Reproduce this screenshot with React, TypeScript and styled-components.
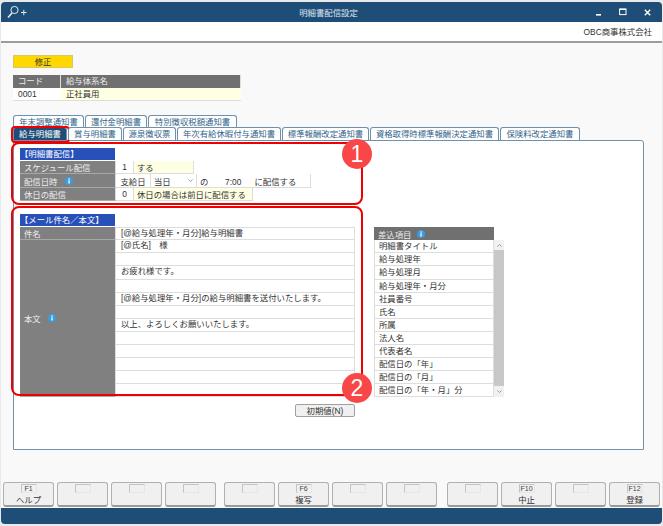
import React from 'react'
import styled, { createGlobalStyle } from 'styled-components'

const GlobalStyle = createGlobalStyle`
  html, body {
    margin: 0;
    padding: 0;
    background: #e9e9e9;
  }
  body {
    font-family: "Liberation Sans", "Noto Sans CJK JP", sans-serif;
    font-size: 8.4px;
    color: #333;
  }
  * {
    box-sizing: border-box;
  }
`

const Win = styled.div`
  display: flex;
  flex-direction: column;
  width: 661px;
  height: 522px;
  margin: 2px 1px 0;
  background: #f9f9f9;
  border-radius: 4px;
  overflow: hidden;
`
const TitleBar = styled.div`
  flex: none;
  display: flex;
  align-items: center;
  height: 20px;
  padding: 0 11px 0 5px;
  background: #1e4d78;
  color: #fff;
`
const TitleSide = styled.div<{ $end?: boolean }>`
  flex: 1;
  display: flex;
  align-items: center;
  justify-content: ${(p) => (p.$end ? 'flex-end' : 'flex-start')};
  gap: 17px;
`
const TitleText = styled.div`
  color: #dfe7ee;
`
const CompanyBar = styled.div`
  flex: none;
  height: 21px;
  padding: 4px 10px 0 0;
  text-align: right;
  line-height: 12px;
  background: #fff;
  border-bottom: 2px solid #9c9c9c;
`
const Content = styled.div`
  flex: 1;
  display: flex;
  flex-direction: column;
  padding: 12px 18px 0 12px;
`
const ModeTag = styled.div`
  width: 60px;
  height: 13px;
  line-height: 12px;
  text-align: center;
  background: #ffd800;
  border: 1px solid #d8c66a;
`
const CodeTable = styled.div`
  display: grid;
  grid-template-columns: 48px 180px;
  grid-auto-rows: 13px;
  width: 228px;
  margin-top: 7px;
`
const HeadCell = styled.div`
  background: #707070;
  color: #eee;
  line-height: 13px;
  padding-left: 5px;
  border-right: 1px solid #ddd;
  &:last-child {
    border-right: 0;
  }
`
const CodeCell = styled.div<{ $yellow?: boolean }>`
  background: ${(p) => (p.$yellow ? '#ffffe4' : '#fff')};
  line-height: 13px;
  padding-left: 5px;
  border-bottom: 1px solid #ddd;
`
const TabRow = styled.div<{ $first?: boolean }>`
  display: flex;
  height: ${(p) => (p.$first ? 12 : 13)}px;
  margin-top: ${(p) => (p.$first ? 14 : 0)}px;
`
const Tab = styled.div<{ $w: number; $active?: boolean }>`
  position: relative;
  width: ${(p) => p.$w}px;
  text-align: center;
  line-height: 13px;
  white-space: nowrap;
  color: ${(p) => (p.$active ? '#fff' : '#2f5f88')};
  background: ${(p) => (p.$active ? '#1e4d78' : '#fff')};
  border: 1px solid #6e92ad;
  border-bottom: 0;
  border-radius: 3px 3px 0 0;
  margin-right: 1px;
  ${(p) =>
    p.$active &&
    `
    &::after {
      content: '';
      position: absolute;
      inset: -2px -4px -3px -3px;
      border: 2.5px solid #f00000;
      border-radius: 4px;
    }
  `}
`
const Panel = styled.div`
  height: 310px;
  width: 631px;
  padding: 7px 0 0 6px;
  background: #fff;
  border: 1px solid #6e92ad;
  border-radius: 0 3px 0 0;
`
const Section = styled.div`
  position: relative;
  width: 335px;
`
const Highlight = styled.div<{ $top: number; $bottom: number }>`
  position: absolute;
  top: ${(p) => p.$top}px;
  bottom: ${(p) => p.$bottom}px;
  left: -9px;
  right: -8px;
  border: 2.5px solid #ee0000;
  border-radius: 8px;
  pointer-events: none;
`
const Badge = styled.div<{ $bottom: number }>`
  position: absolute;
  right: -17px;
  bottom: ${(p) => p.$bottom}px;
  width: 30px;
  height: 30px;
  border-radius: 50%;
  background: #f94646;
  color: #fff;
  font-family: "Liberation Sans", sans-serif;
  font-size: 23px;
  line-height: 30px;
  text-align: center;
`
const SectionHead = styled.div`
  width: 95px;
  height: 12px;
  line-height: 12px;
  background: #2750b8;
  color: #fff;
  margin-bottom: 1px;
`
const SetRow = styled.div`
  display: flex;
  height: 13.4px;
`
const Label = styled.div`
  flex: none;
  display: flex;
  align-items: center;
  gap: 7px;
  width: 96px;
  padding-left: 4px;
  background: #808080;
  color: #eee;
  border-right: 1px solid #ddd;
  border-bottom: 1px solid #a8a8a8;
`
const Val = styled.div<{ $w: number; $yellow?: boolean; $center?: boolean }>`
  flex: none;
  display: flex;
  justify-content: ${(p) => (p.$center ? 'center' : 'space-between')};
  align-items: center;
  width: ${(p) => p.$w}px;
  padding: 0 3px;
  white-space: pre;
  background: ${(p) => (p.$yellow ? '#ffffe4' : '#fff')};
  border-right: 1px solid #ddd;
  border-bottom: 1px solid #ddd;
`
const MailArea = styled.div`
  display: flex;
  margin-top: 13px;
  gap: 19px;
`
const MailColumn = styled.div`
  display: flex;
  flex-direction: column;
`
const MailGrid = styled.div`
  display: grid;
  grid-template-columns: 96px 239px;
  grid-auto-rows: 13.1px;
`
const BodyLabel = styled(Label)`
  grid-column: 1;
  grid-row: 2 / span 12;
`
const MailLine = styled.div`
  grid-column: 2;
  padding-left: 5px;
  line-height: 11px;
  white-space: pre;
  background: #fff;
  border-right: 1px solid #ddd;
  border-bottom: 1px solid #ddd;
  &:nth-child(2) {
    border-top: 1px solid #ddd;
  }
`
const ResetButton = styled.div`
  align-self: flex-end;
  width: 60px;
  height: 13px;
  margin-top: 7px;
  line-height: 12px;
  text-align: center;
  background: #f0f0f0;
  border: 1px solid #a0a0a0;
  border-radius: 2px;
`
const InsertList = styled.div`
  display: grid;
  grid-template-columns: 120px 10px;
  grid-auto-rows: 13.1px;
  margin-top: 13px;
  width: 130px;
  height: 171px;
`
const InsertHead = styled.div`
  grid-column: 1;
  display: flex;
  align-items: center;
  gap: 5px;
  padding-left: 4px;
  background: #707070;
  color: #eee;
`
const InsertItem = styled.div`
  grid-column: 1;
  padding-left: 4px;
  line-height: 12px;
  background: #fff;
  border: 1px solid #ddd;
  border-top: 0;
`
const ScrollBar = styled.div`
  grid-column: 2;
  grid-row: 2 / span 12;
  display: flex;
  flex-direction: column;
  align-items: stretch;
  background: #f1f1f1;
`
const ScrollArrow = styled.div<{ $top?: boolean }>`
  flex: none;
  display: flex;
  align-items: center;
  justify-content: center;
  height: ${(p) => (p.$top ? 10 : 11)}px;
`
const ScrollThumb = styled.div`
  flex: 1;
  background: #c8c8c8;
`
const FunctionBar = styled.div`
  flex: none;
  display: flex;
  align-items: stretch;
  height: 26px;
  margin: auto -16px 0 -10px;
`
const FnGroup = styled.div<{ $gap: number }>`
  display: flex;
  gap: 3px;
  margin-right: ${(p) => p.$gap}px;
`
const FnButton = styled.div`
  width: 51px;
  height: 25px;
  display: flex;
  flex-direction: column;
  align-items: center;
  background: #f0f0f0;
  border: 1px solid #b0b0b0;
  border-bottom: 2px solid #9a9a9a;
  border-radius: 3px;
`
const FnKey = styled.div`
  width: 16px;
  height: 9px;
  margin-top: 1px;
  font-size: 7px;
  line-height: 8px;
  text-align: center;
  color: #444;
  border: 1px solid #e6e6e6;
  border-top-color: #c4c4c4;
  border-left-color: #c4c4c4;
`
const FnLabel = styled.div`
  margin-top: 2px;
  line-height: 11px;
  color: #333;
`
const StatusBar = styled.div`
  flex: none;
  height: 16px;
  background: #1e4d78;
`

const InfoIcon = () => (
  <svg width="8" height="8" viewBox="0 0 8 8">
    <circle cx="4" cy="4" r="4" fill="#3d9be0" />
    <rect x="3.4" y="3.3" width="1.3" height="3.2" fill="#fff" />
    <rect x="3.4" y="1.4" width="1.3" height="1.3" fill="#fff" />
  </svg>
)

const SearchPlus = () => (
  <svg width="22" height="14" viewBox="0 0 22 14" fill="none" stroke="#e4ecf3" strokeWidth="1">
    <circle cx="8.5" cy="5" r="3.6" />
    <path d="M6 8 L2 12.5" strokeWidth="1.6" />
    <path d="M15 7.5 H20.5 M17.8 4.8 V10.2" />
  </svg>
)

const Chevron = ({ up }: { up?: boolean }) => (
  <svg width="5" height="3" viewBox="0 0 5 3" fill="none" stroke="#888" strokeWidth="0.8">
    <path d={up ? 'M0.4 2.6 L2.5 0.5 L4.6 2.6' : 'M0.4 0.4 L2.5 2.5 L4.6 0.4'} />
  </svg>
)

const WinControls = () => (
  <>
    <svg width="6" height="8" viewBox="0 0 6 8">
      <rect x="0" y="6" width="5" height="1.6" fill="#fff" />
    </svg>
    <svg width="8" height="8" viewBox="0 0 8 8" fill="none" stroke="#fff">
      <rect x="0.6" y="1" width="6.4" height="5.6" />
      <path d="M0.6 1.4 H7" strokeWidth="1.4" />
    </svg>
    <svg width="7" height="7" viewBox="0 0 7 7" fill="none" stroke="#fff" strokeWidth="1.4">
      <path d="M0.8 0.8 L6.2 6.2 M6.2 0.8 L0.8 6.2" />
    </svg>
  </>
)

const tabsTop = [
  { label: '年末調整通知書', w: 71 },
  { label: '還付金明細書', w: 62 },
  { label: '特別徴収税額通知書', w: 89 },
]
const tabsBottom = [
  { label: '給与明細書', w: 54, active: true },
  { label: '賞与明細書', w: 54 },
  { label: '源泉徴収票', w: 53 },
  { label: '年次有給休暇付与通知書', w: 104 },
  { label: '標準報酬改定通知書', w: 87 },
  { label: '資格取得時標準報酬決定通知書', w: 129 },
  { label: '保険料改定通知書', w: 80 },
]
const mailLines = [
  '[@氏名]　様',
  '',
  'お疲れ様です。',
  '',
  '[@給与処理年・月分]の給与明細書を送付いたします。',
  '',
  '以上、よろしくお願いいたします。',
  '',
  '',
  '',
  '',
  '',
]
const insertItems = [
  '明細書タイトル',
  '給与処理年',
  '給与処理月',
  '給与処理年・月分',
  '社員番号',
  '氏名',
  '所属',
  '法人名',
  '代表者名',
  '配信日の「年」',
  '配信日の「月」',
  '配信日の「年・月」分',
]
const fnGroups = [
  { gap: 8, keys: [['F1', 'ヘルプ'], ['', ''], ['', ''], ['', '']] },
  { gap: 10, keys: [['', ''], ['F6', '複写'], ['', ''], ['', '']] },
  { gap: 0, keys: [['', ''], ['F10', '中止'], ['', ''], ['F12', '登録']] },
]

export default function App() {
  return (
    <>
      <GlobalStyle />
      <Win>
        <TitleBar>
          <TitleSide>
            <SearchPlus />
          </TitleSide>
          <TitleText>明細書配信設定</TitleText>
          <TitleSide $end>
            <WinControls />
          </TitleSide>
        </TitleBar>
        <CompanyBar>OBC商事株式会社</CompanyBar>
        <Content>
          <ModeTag>修正</ModeTag>
          <CodeTable>
            <HeadCell>コード</HeadCell>
            <HeadCell>給与体系名</HeadCell>
            <CodeCell>0001</CodeCell>
            <CodeCell $yellow>正社員用</CodeCell>
          </CodeTable>
          <TabRow $first>
            {tabsTop.map((t) => (
              <Tab key={t.label} $w={t.w}>
                {t.label}
              </Tab>
            ))}
          </TabRow>
          <TabRow>
            {tabsBottom.map((t) => (
              <Tab key={t.label} $w={t.w} $active={t.active}>
                {t.label}
              </Tab>
            ))}
          </TabRow>
          <Panel>
            <Section>
              <SectionHead>【明細書配信】</SectionHead>
              <SetRow>
                <Label>スケジュール配信</Label>
                <Val $w={18} $center>1</Val>
                <Val $w={60} $yellow>する</Val>
              </SetRow>
              <SetRow>
                <Label>
                  配信日時
                  <InfoIcon />
                </Label>
                <Val $w={35} $center>支給日</Val>
                <Val $w={46}>
                  当日
                  <Chevron />
                </Val>
                <Val $w={114}>{'の　　7:00　  に配信する'}</Val>
              </SetRow>
              <SetRow>
                <Label>休日の配信</Label>
                <Val $w={18} $center>0</Val>
                <Val $w={119} $yellow>休日の場合は前日に配信する</Val>
              </SetRow>
              <Highlight $top={-6} $bottom={-4} />
              <Badge $bottom={32}>1</Badge>
            </Section>
            <MailArea>
              <MailColumn>
                <Section>
                  <SectionHead>【メール件名／本文】</SectionHead>
                  <MailGrid>
                    <Label>件名</Label>
                    <MailLine>[@給与処理年・月分]給与明細書</MailLine>
                    <BodyLabel>
                      本文
                      <InfoIcon />
                    </BodyLabel>
                    {mailLines.map((line, i) => (
                      <MailLine key={i}>{line}</MailLine>
                    ))}
                  </MailGrid>
                  <Highlight $top={-8} $bottom={1} />
                  <Badge $bottom={-6}>2</Badge>
                </Section>
                <ResetButton>初期値(N)</ResetButton>
              </MailColumn>
              <InsertList>
                <InsertHead>
                  差込項目
                  <InfoIcon />
                </InsertHead>
                {insertItems.map((item) => (
                  <InsertItem key={item}>{item}</InsertItem>
                ))}
                <ScrollBar>
                  <ScrollArrow $top>
                    <Chevron up />
                  </ScrollArrow>
                  <ScrollThumb />
                  <ScrollArrow>
                    <Chevron />
                  </ScrollArrow>
                </ScrollBar>
              </InsertList>
            </MailArea>
          </Panel>
          <FunctionBar>
            {fnGroups.map((g, gi) => (
              <FnGroup key={gi} $gap={g.gap}>
                {g.keys.map(([key, label], i) => (
                  <FnButton key={i}>
                    <FnKey>{key}</FnKey>
                    <FnLabel>{label}</FnLabel>
                  </FnButton>
                ))}
              </FnGroup>
            ))}
          </FunctionBar>
        </Content>
        <StatusBar />
      </Win>
    </>
  )
}
